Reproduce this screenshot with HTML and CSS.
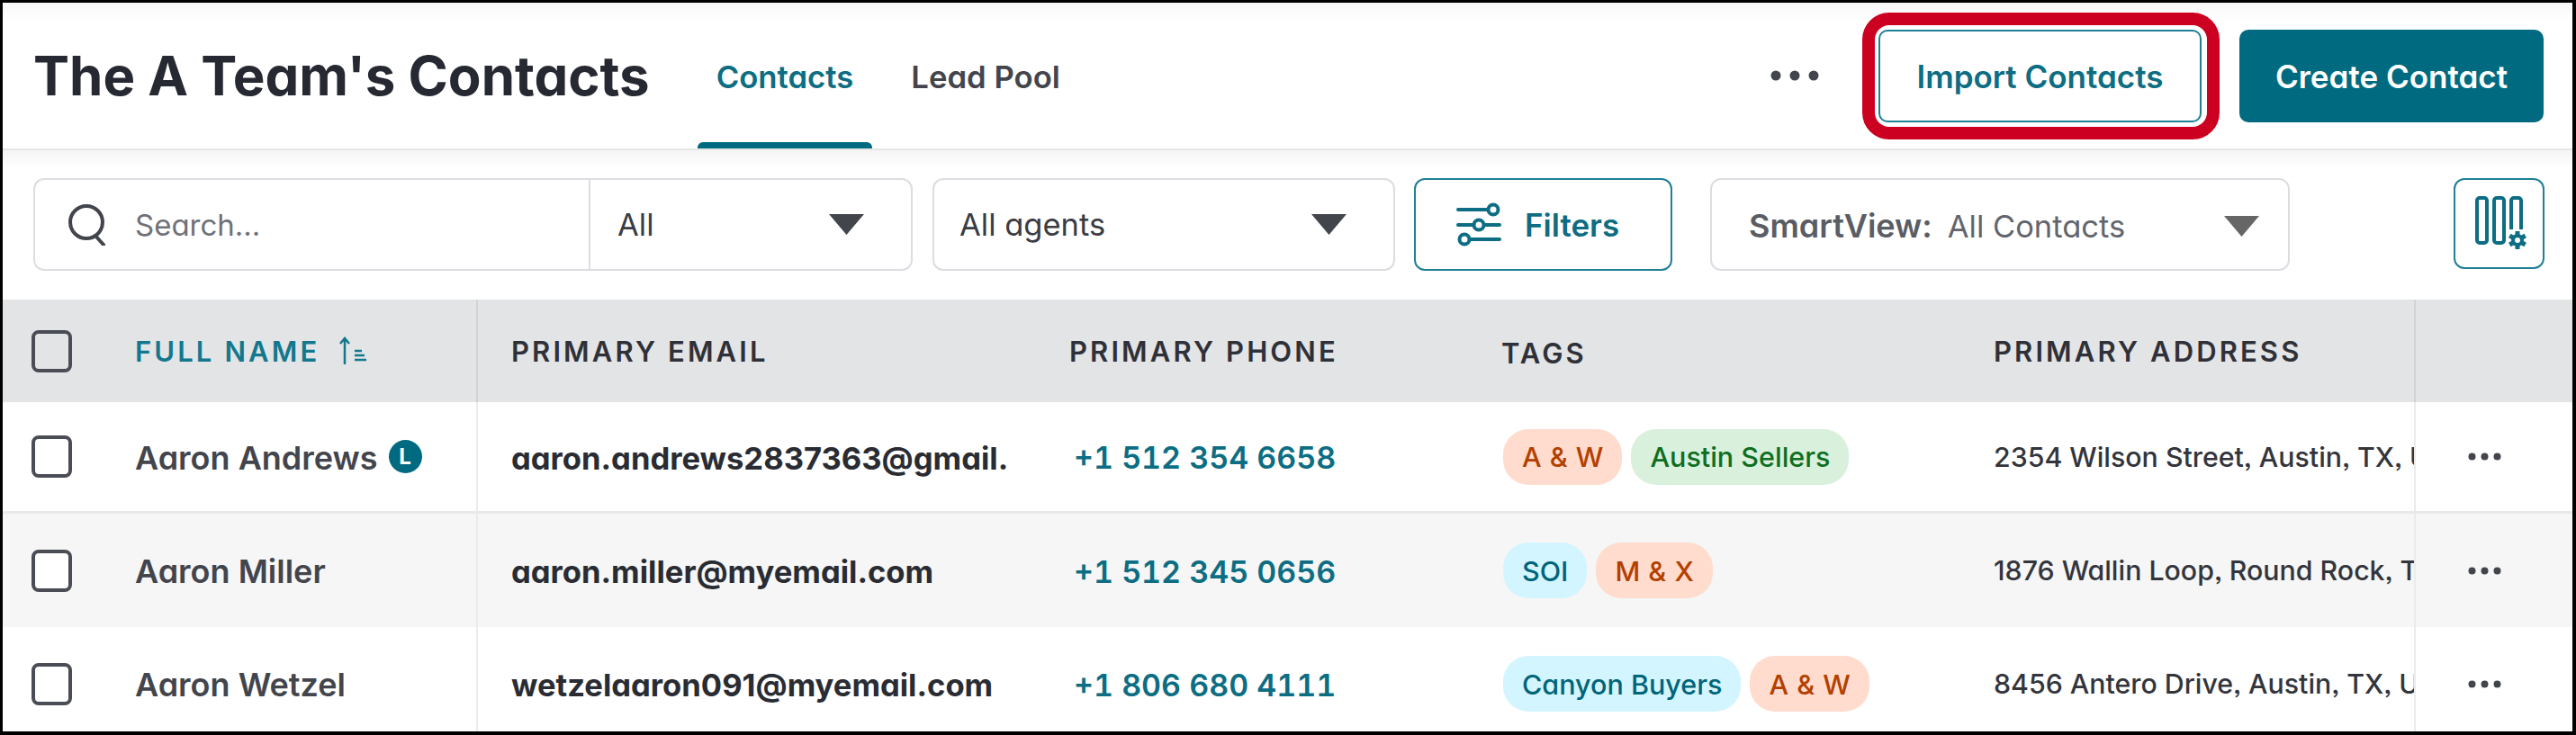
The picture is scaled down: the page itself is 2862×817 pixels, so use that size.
FILE: index.html
```html
<!DOCTYPE html>
<html lang="en">
<head>
<meta charset="utf-8">
<title>The A Team's Contacts</title>
<link rel="stylesheet" href="styles.css">
</head>
<body>
<div class="frame">
  <header class="topbar">
    <h1 class="title">The A Team's Contacts</h1>
    <nav class="tabs">
      <a class="tab tab-active">Contacts</a>
      <a class="tab">Lead Pool</a>
    </nav>
    <div class="actions">
      <svg class="more-icon" viewBox="0 0 54 12"><circle cx="6" cy="6" r="5.5"/><circle cx="27" cy="6" r="5.5"/><circle cx="48" cy="6" r="5.5"/></svg>
      <button class="btn btn-outline btn-highlighted">Import Contacts</button>
      <button class="btn btn-solid">Create Contact</button>
    </div>
  </header>

  <div class="toolbar">
    <div class="box search-box">
      <div class="search-field">
        <svg class="search-icon" viewBox="0 0 46 46"><circle cx="21" cy="20" r="18"/><path d="M31 35l9 10"/></svg>
        <span class="placeholder">Search...</span>
      </div>
      <div class="search-scope">
        <span class="select-text">All</span>
        <svg class="caret" viewBox="0 0 39 23"><path d="M0 0h39L19.500 23z"/></svg>
      </div>
    </div>
    <div class="box agent-select">
      <span class="select-text">All agents</span>
      <svg class="caret" viewBox="0 0 39 23"><path d="M0 0h39L19.500 23z"/></svg>
    </div>
    <button class="filter-btn">
      <svg class="filter-icon" viewBox="0 0 46 46"><path d="M0 6h32M0 23h18M28 23h18M14 39h32"/><circle cx="39" cy="6" r="5.500"/><circle cx="23" cy="23" r="5.500"/><circle cx="7" cy="39" r="5.500"/></svg>
      <span>Filters</span>
    </button>
    <div class="box smartview">
      <span class="sv-label">SmartView:</span>
      <span class="sv-value">All Contacts</span>
      <svg class="caret caret-grey" viewBox="0 0 39 23"><path d="M0 0h39L19.500 23z"/></svg>
    </div>
    <button class="columns-btn">
      <svg class="columns-icon" viewBox="0 0 58 62"><rect x="2" y="2" width="11" height="50" rx="3"/><rect x="21" y="2" width="11" height="50" rx="3"/><path d="M40 37V5a3 3 0 0 1 3-3h5a3 3 0 0 1 3 3v32"/><circle cx="47" cy="49" r="5"/><path class="gear-teeth" d="M47 39v4M47 55v4M38.300 44l3.500 2M52.200 52l3.500 2M38.300 54l3.500-2M52.200 46l3.500-2"/></svg>
    </button>
  </div>

  <div class="table">
    <div class="row row-head">
      <div class="cell cell-name">
        <span class="check"></span>
        <span class="th th-active">FULL NAME</span>
        <svg class="sort-icon" viewBox="0 0 32 32"><path d="M8 31V2M3 8l5-6 5 6M19 16h8M19 21h11M19 26h13"/></svg>
      </div>
      <div class="cell cell-email"><span class="th">PRIMARY EMAIL</span></div>
      <div class="cell cell-phone"><span class="th">PRIMARY PHONE</span></div>
      <div class="cell cell-tags"><span class="th th-tags">TAGS</span></div>
      <div class="cell cell-address"><span class="th">PRIMARY ADDRESS</span></div>
      <div class="cell cell-menu"></div>
    </div>

    <div class="row row-first">
      <div class="cell cell-name"><span class="check"></span><span class="name">Aaron Andrews</span><span class="lead-badge">L</span></div>
      <div class="cell cell-email"><span class="email">aaron.andrews2837363@gmail.</span></div>
      <div class="cell cell-phone"><span class="phone">+1 512 354 6658</span></div>
      <div class="cell cell-tags"><span class="tag tag-peach">A &amp; W</span><span class="tag tag-green">Austin Sellers</span></div>
      <div class="cell cell-address"><span class="address">2354 Wilson Street, Austin, TX, USA</span></div>
      <div class="cell cell-menu"><svg class="row-menu" viewBox="0 0 37 9"><circle cx="4.500" cy="4.500" r="4"/><circle cx="18.500" cy="4.500" r="4"/><circle cx="32.500" cy="4.500" r="4"/></svg></div>
    </div>

    <div class="row row-alt">
      <div class="cell cell-name"><span class="check"></span><span class="name">Aaron Miller</span></div>
      <div class="cell cell-email"><span class="email">aaron.miller@myemail.com</span></div>
      <div class="cell cell-phone"><span class="phone">+1 512 345 0656</span></div>
      <div class="cell cell-tags"><span class="tag tag-blue">SOI</span><span class="tag tag-peach">M &amp; X</span></div>
      <div class="cell cell-address"><span class="address">1876 Wallin Loop, Round Rock, TX, USA</span></div>
      <div class="cell cell-menu"><svg class="row-menu" viewBox="0 0 37 9"><circle cx="4.500" cy="4.500" r="4"/><circle cx="18.500" cy="4.500" r="4"/><circle cx="32.500" cy="4.500" r="4"/></svg></div>
    </div>

    <div class="row">
      <div class="cell cell-name"><span class="check"></span><span class="name">Aaron Wetzel</span></div>
      <div class="cell cell-email"><span class="email">wetzelaaron091@myemail.com</span></div>
      <div class="cell cell-phone"><span class="phone">+1 806 680 4111</span></div>
      <div class="cell cell-tags"><span class="tag tag-blue">Canyon Buyers</span><span class="tag tag-peach">A &amp; W</span></div>
      <div class="cell cell-address"><span class="address">8456 Antero Drive, Austin, TX, USA</span></div>
      <div class="cell cell-menu"><svg class="row-menu" viewBox="0 0 37 9"><circle cx="4.500" cy="4.500" r="4"/><circle cx="18.500" cy="4.500" r="4"/><circle cx="32.500" cy="4.500" r="4"/></svg></div>
    </div>
  </div>
</div>
</body>
</html>
```

FILE: styles.css
```css
* { box-sizing: border-box; }
html, body { margin: 0; padding: 0; }
body {
  width: 2862px;
  height: 817px;
  overflow: hidden;
  background: #fff;
  font-family: Inter, "Liberation Sans", sans-serif;
  font-feature-settings: "cv11" 1, "ss03" 1;
  color: #2a2c33;
}
.frame {
  width: 2862px;
  height: 817px;
  border-style: solid;
  border-color: #000;
  border-width: 3px 4px 4px 3px;
  overflow: hidden;
  background: #fff;
}

/* Top bar */
.topbar {
  height: 164px;
  display: flex;
  align-items: center;
  padding: 0 32px 0 34px;
  background: linear-gradient(#f8f8f8, #fff 22px);
  border-bottom: 2px solid #e6e6e7;
}
.title {
  margin: 0;
  font-size: 60px;
  font-weight: 700;
  color: #272932;
  white-space: nowrap;
}
.tabs {
  display: flex;
  align-self: stretch;
  gap: 22px;
  margin-left: 53px;
}
.tab {
  position: relative;
  display: flex;
  align-items: center;
  padding: 2px 21px 0;
  font-size: 34.700px;
  font-weight: 600;
  color: #43454d;
}
.tab-active { color: #0c6d83; }
.tab-active::after {
  content: "";
  position: absolute;
  left: 0;
  right: 0;
  bottom: 0;
  height: 7px;
  border-radius: 6px 6px 0 0;
  background: #006b80;
}
.actions {
  margin-left: auto;
  display: flex;
  align-items: center;
}
.more-icon { width: 54px; height: 12px; fill: #43454d; margin-right: 66px; }
.btn {
  height: 103px;
  border-radius: 10px;
  font-family: inherit;
  font-feature-settings: inherit;
  font-size: 35px;
  font-weight: 600;
  padding: 2px 0 0;
}
.btn-outline {
  position: relative;
  width: 359px;
  background: #fff;
  border: 2px solid #1f7f95;
  color: #0c6d83;
}
.btn-highlighted::after {
  content: "";
  position: absolute;
  top: -21px;
  bottom: -21px;
  left: -20px;
  right: -22px;
  border: 14px solid #cc0020;
  border-radius: 30px;
  pointer-events: none;
}
.btn-solid {
  width: 338px;
  margin-left: 42px;
  background: #006b80;
  border: 0;
  color: #fff;
}

/* Toolbar */
.toolbar {
  display: flex;
  align-items: flex-start;
  padding: 31px 31px 32px 34px;
  background: linear-gradient(#f4f4f5, #fff 20px);
}
.box {
  height: 103px;
  display: flex;
  align-items: center;
  background: #fff;
  border: 2px solid #dcdde0;
  border-radius: 12px;
}
.search-box { width: 977px; }
.search-field {
  width: 617px;
  height: 100%;
  display: flex;
  align-items: center;
  padding-left: 36px;
  gap: 29px;
  border-right: 2px solid #dcdde0;
}
.search-icon { width: 46px; height: 46px; fill: none; stroke: #43454d; stroke-width: 4; stroke-linecap: round; }
.placeholder { font-size: 33px; font-weight: 400; color: #6f7278; }
.search-scope {
  flex: 1;
  display: flex;
  align-items: center;
  justify-content: space-between;
  padding: 0 52px 0 30px;
}
.select-text { font-size: 34.500px; font-weight: 400; color: #3a3c44; }
.caret { width: 39px; height: 23px; fill: #43454d; }
.caret-grey { fill: #666; margin-left: auto; }
.agent-select {
  width: 514px;
  margin-left: 22px;
  justify-content: space-between;
  padding: 0 52px 0 28px;
}
.filter-btn {
  width: 287px;
  height: 103px;
  margin-left: 21px;
  display: flex;
  align-items: center;
  padding: 0 0 0 47px;
  gap: 28px;
  background: #fff;
  border: 2px solid #1f7f95;
  border-radius: 12px;
  font-family: inherit;
  font-feature-settings: inherit;
  font-size: 35px;
  font-weight: 600;
  color: #0c6d83;
}
.filter-icon { width: 46px; height: 46px; fill: #fff; stroke: #0c6d83; stroke-width: 4; stroke-linecap: round; overflow: visible; }
.smartview {
  width: 644px;
  margin-left: 42px;
  padding: 3px 32px 0 41px;
}
.sv-label { font-size: 36px; font-weight: 600; color: #5a5d64; }
.sv-value { font-size: 34.500px; font-weight: 400; color: #62656c; margin-left: 17px; }
.columns-btn {
  width: 101px;
  height: 101px;
  margin-left: auto;
  padding: 0;
  display: flex;
  align-items: center;
  justify-content: center;
  background: #fff;
  border: 2px solid #1f7f95;
  border-radius: 12px;
}
.columns-icon { width: 58px; height: 62px; margin: 0 0 0 4px; fill: none; stroke: #0c6d83; stroke-width: 4; }
.gear-teeth { stroke-width: 5; }

/* Table */
.row {
  display: grid;
  grid-template-columns: 528px 620px 480px 547px 504px 176px;
  height: 126px;
  background: #fff;
}
.row-head { height: 114px; background: #e3e4e6; }
.row-first { height: 124px; border-bottom: 3px solid #e9e9ea; }
.row-alt { background: #f6f6f6; }
.cell {
  display: flex;
  align-items: center;
  min-width: 0;
  overflow: hidden;
  white-space: nowrap;
}
.cell-name { padding-left: 32px; border-right: 2px solid #ebebec; }
.row-head .cell-name { border-right-color: #d2d3d5; }
.cell-email, .cell-phone, .cell-tags, .cell-address { padding-left: 37px; }
.cell-menu { justify-content: flex-start; padding-left: 58px; border-left: 2px solid #ebebec; }
.row-head .cell-menu { border-left-color: #d2d3d5; }
.check {
  flex: none;
  width: 45px;
  height: 47px;
  border: 4px solid #4a4d55;
  border-radius: 8px;
  background: #fff;
  margin-right: 70px;
}
.row-head .check { background: transparent; }
.th {
  font-size: 31px;
  font-weight: 600;
  letter-spacing: 3.100px;
  color: #2f3138;
}
.th-active { color: #13788e; }
.th-tags { position: relative; top: 2px; }
.sort-icon { width: 32px; height: 32px; margin-left: 20px; fill: none; stroke: #13788e; stroke-width: 2.500; }
.name { font-size: 36px; font-weight: 600; color: #43454d; padding-top: 2px; }
.lead-badge {
  flex: none;
  display: flex;
  align-items: center;
  justify-content: center;
  width: 37px;
  height: 37px;
  margin-left: 12px;
  border-radius: 50%;
  background: #006b80;
  color: #fff;
  font-size: 24px;
  font-weight: 700;
}
.email { font-size: 34.600px; font-weight: 700; color: #2a2c33; padding-top: 2px; }
.phone {
  font-size: 34px;
  font-weight: 600;
  font-variant-numeric: tabular-nums;
  color: #0c6d83;
  padding: 2px 0 0 5px;
}
.cell-tags { gap: 10px; }
.tag {
  display: flex;
  align-items: center;
  height: 62px;
  padding: 0 21px;
  border-radius: 28px;
  font-size: 30.500px;
  font-weight: 500;
}
.cell-tags .tag:first-child { margin-left: 2px; }
.tag-peach { background: #ffdccd; color: #b33f00; word-spacing: 1px; }
.tag-green { background: #d8f0dc; color: #0f6e1f; }
.tag-blue { background: #d3f5ff; color: #00647a; }
.address { font-size: 30.300px; font-weight: 500; color: #33353c; }
.row-menu { width: 37px; height: 9px; fill: #43454d; }
```
